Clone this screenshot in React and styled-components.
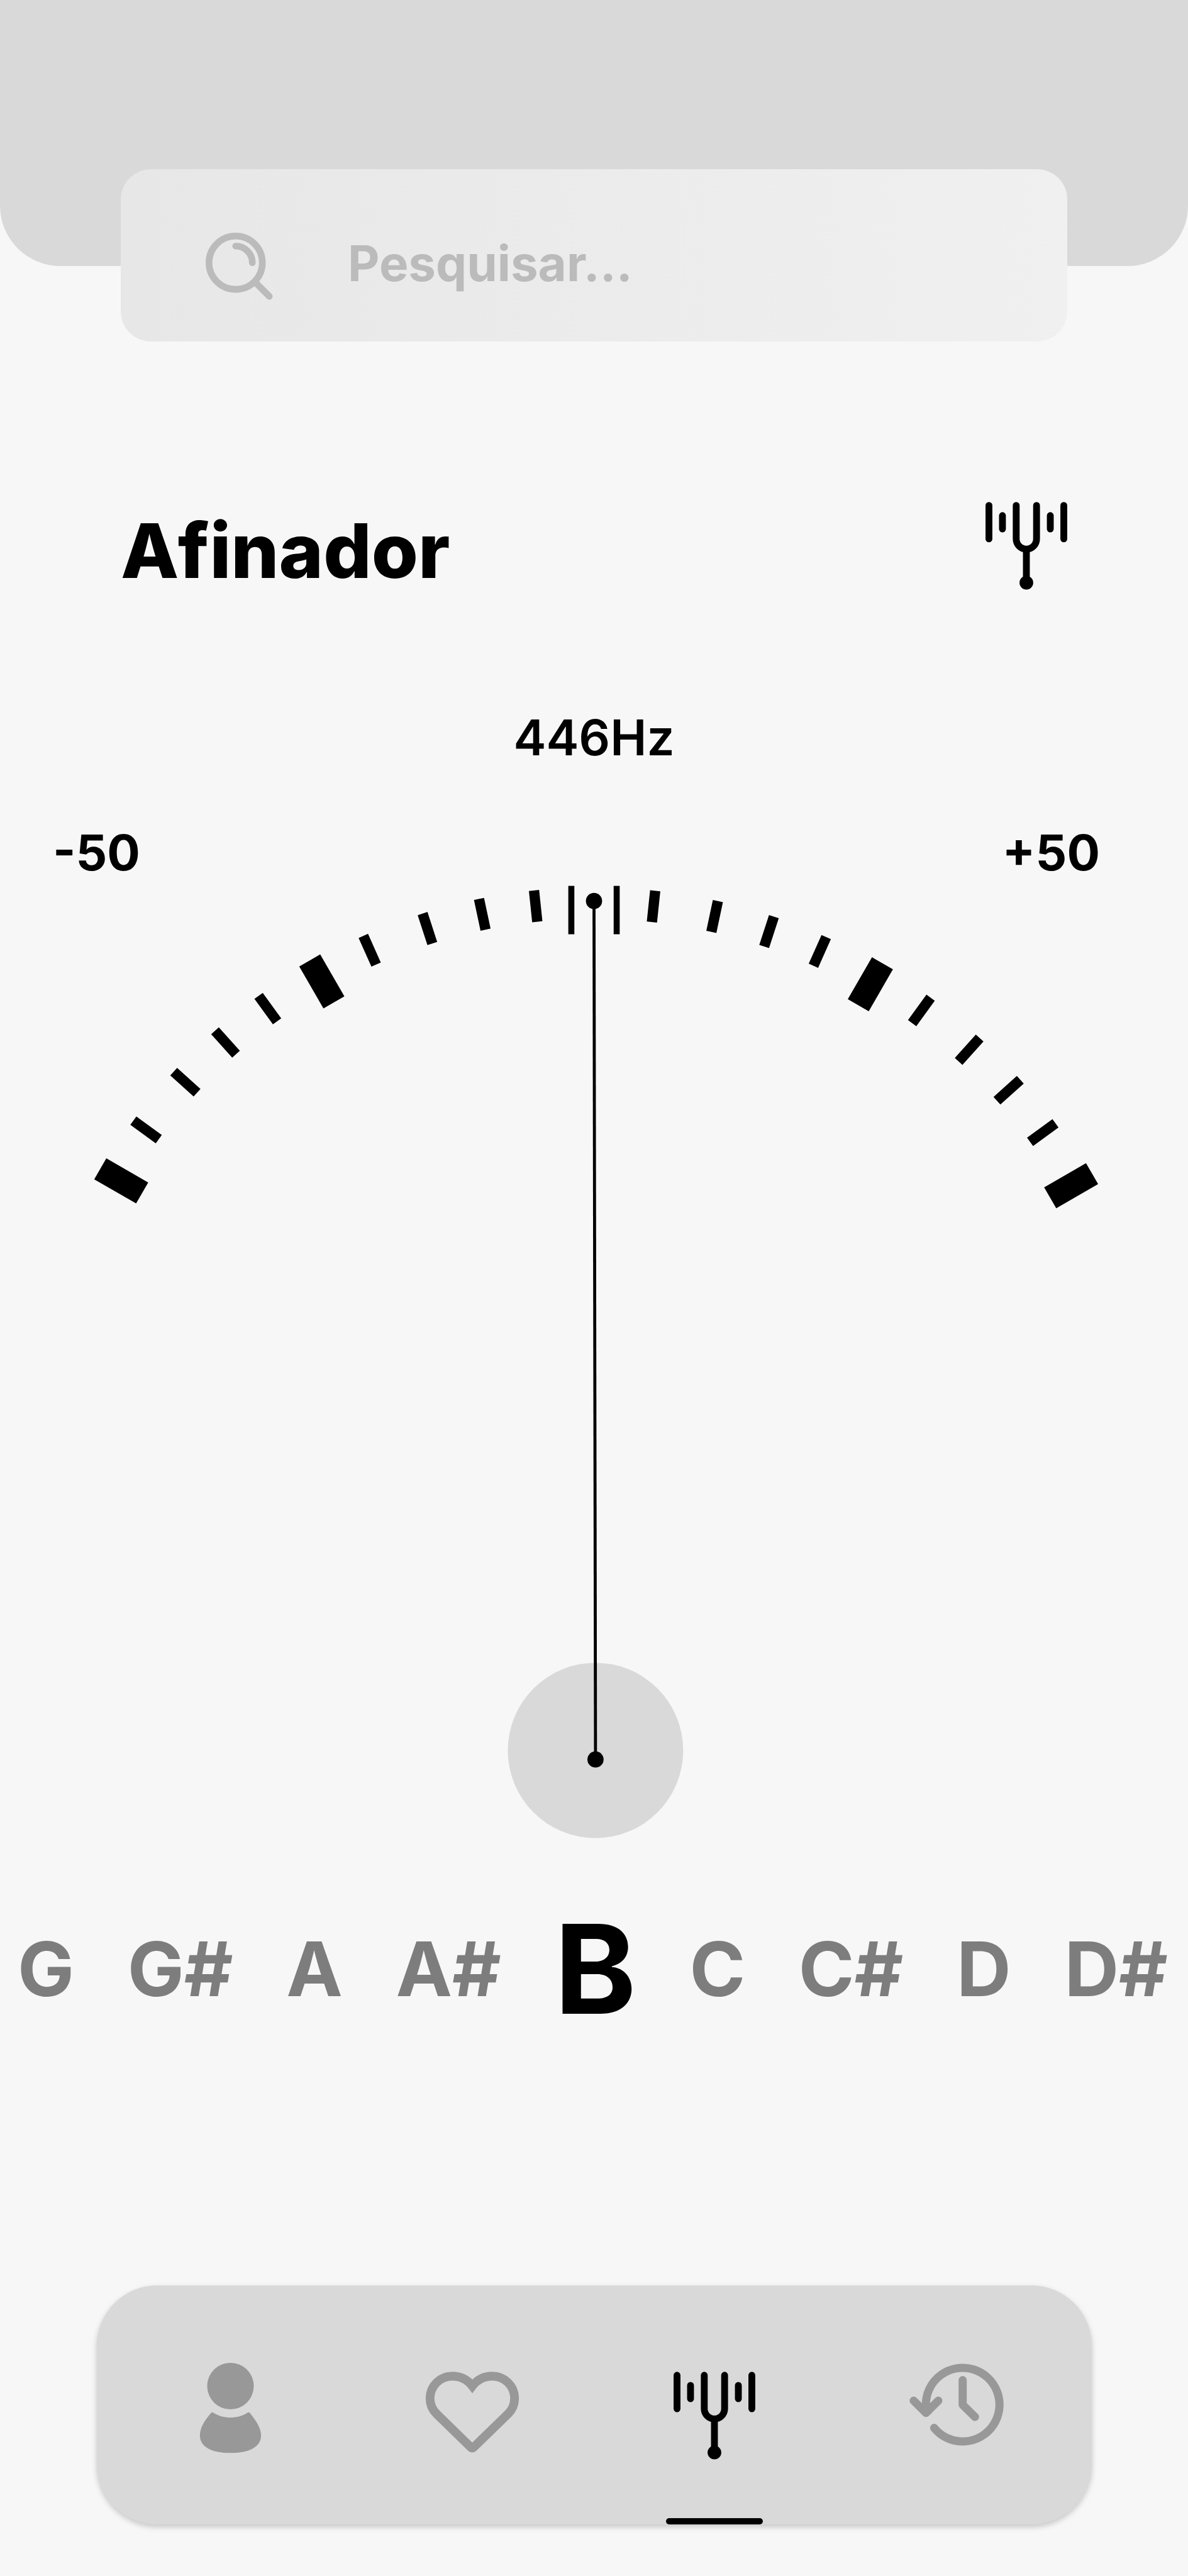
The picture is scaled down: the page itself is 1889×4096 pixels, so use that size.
import React from "react";
import styled, { createGlobalStyle } from "styled-components";

const GlobalStyle = createGlobalStyle`
  *, *::before, *::after { box-sizing: border-box; }
  body {
    margin: 0;
    background: #f7f7f7;
    color: #000;
    font-family: Inter, "Liberation Sans", sans-serif;
  }
`;

const Page = styled.div`
  display: flex;
  flex-direction: column;
  min-height: 100vh;
  padding-bottom: 82px;
  overflow: hidden;
`;

const Header = styled.header`
  height: 423px;
  background: #d9d9d9;
  border-radius: 0 0 96px 96px;
`;

const SearchBox = styled.label`
  display: flex;
  align-items: flex-start;
  gap: 118px;
  height: 274px;
  margin: -154px 192px 0;
  padding: 101px 60px 0 135px;
  border-radius: 48px;
  background: linear-gradient(90deg, #e7e7e7, #f0f0f0);
`;

const SearchIcon = styled.svg`
  flex: none;
  width: 108px;
  height: 108px;
`;

const SearchInput = styled.input`
  flex: 1;
  min-width: 0;
  height: 98px;
  padding: 0;
  border: 0;
  outline: 0;
  background: transparent;
  color: #555;
  font: 700 78px/98px Inter, "Liberation Sans", sans-serif;

  &::placeholder {
    color: #bbb;
    opacity: 1;
  }
`;

const TitleRow = styled.div`
  display: flex;
  align-items: flex-start;
  justify-content: space-between;
  margin: 255px 192px 0;
`;

const Title = styled.h1`
  margin: 0;
  font-size: 120px;
  font-weight: 800;
  line-height: 156px;
`;

const TitleIcon = styled.svg`
  width: 130px;
  height: 140px;
`;

const Frequency = styled.output`
  display: block;
  margin-top: 179px;
  font-size: 78px;
  font-weight: 600;
  line-height: 80px;
  text-align: center;
`;

const RangeRow = styled.div`
  display: flex;
  justify-content: space-between;
  margin-top: 103px;
  padding: 0 140px 0 84px;
`;

const RangeLabel = styled.span`
  font-size: 78px;
  font-weight: 700;
  line-height: 80px;
`;

const Gauge = styled.svg`
  display: block;
  width: 100%;
  height: auto;
  margin-top: 3px;
`;

const Notes = styled.div`
  display: flex;
  align-items: center;
  justify-content: space-between;
  margin-top: 108px;
  padding: 0 32px 0 28px;
`;

const Note = styled.button`
  padding: 0;
  border: 0;
  background: none;
  cursor: pointer;
  font-family: inherit;
  font-size: ${(p) => (p.$active ? 197 : 120)}px;
  font-weight: 700;
  line-height: 200px;
  color: ${(p) => (p.$active ? "#000" : "#7d7d7d")};
`;

const NavBar = styled.nav`
  display: grid;
  grid-template-columns: repeat(4, 1fr);
  height: 380px;
  margin: 403px 153px 0 154px;
  padding: 0 22px 0 19px;
  border-radius: 96px;
  background: #d9d9d9;
  box-shadow: 0 4px 10px rgba(0, 0, 0, 0.2);
`;

const NavLink = styled.a`
  display: flex;
  flex-direction: column;
  align-items: center;
  justify-content: space-between;
  padding-top: 120px;
  color: ${(p) => (p.$active ? "#000" : "#989898")};

  &::after {
    content: "";
    width: 154px;
    height: 10px;
    border-radius: 5px;
    background: ${(p) => (p.$active ? "#000" : "transparent")};
  }
`;

const NavIcon = styled.svg`
  width: 154px;
  height: 154px;
  overflow: visible;
`;

const Fork = () => (
  <g stroke="currentColor" strokeWidth="11.3" strokeLinecap="round" fill="none">
    <path d="M5.7 5.7V61M28 22.4V44.5M107 22.4V44.5M129.3 5.7V61" />
    <path d="M50.7 5.7V61a16.8 16.8 0 0 0 33.6 0V5.7M67.5 78V133" />
    <circle cx="67.5" cy="133.3" r="11.3" fill="currentColor" stroke="none" />
  </g>
);

const Person = () => (
  <g fill="currentColor">
    <circle cx="50.5" cy="38.5" r="38.5" />
    <path d="M22.5 82.6C38 93 63 93 78.5 82.6Q81 81 83 83.5C92 95 101 107 101 120C101 138 83 149 50.5 149C18 149 0 138 0 120C0 107 8 95 18 83.5Q20 81 22.5 82.6Z" />
  </g>
);

const Heart = () => (
  <path
    fill="none"
    stroke="currentColor"
    strokeWidth="14.5"
    d="M77 23.5C69 13 57 7.2 44 7.2C24 7.2 7.2 23 7.2 44C7.2 54 11 62.5 18 69.5L75 125Q77 127 79 125L136 69.5C143 62.5 146.8 54 146.8 44C146.8 23 130 7.2 110 7.2C97 7.2 85 13 77 23.5Z"
  />
);

const History = () => (
  <g
    fill="none"
    stroke="currentColor"
    strokeWidth="13.5"
    strokeLinecap="round"
    strokeLinejoin="round"
  >
    <path d="M26.8 78V67.5A60.8 60.8 0 1 1 40.5 105.7" />
    <path d="M6.7 60.7L27 81L47.3 60.7M27 66V80" />
    <path d="M87.6 26.7V67.5L108 87.5" />
  </g>
);

/* Each tick: centre x, centre y, direction in degrees, and whether it marks a main step */
const TICKS = [
  [200.5, 1953, 30, true],
  [241.6, 1868.6, 36],
  [306.6, 1789.7, 42],
  [373, 1724, 48],
  [443, 1668, 54],
  [532.3, 1623, 60, true],
  [611.5, 1571.4, 66],
  [707, 1535.5, 72],
  [797.7, 1512, 78],
  [886, 1498.4, 84],
  [1081, 1499, 96],
  [1182, 1515.6, 102],
  [1272, 1540.6, 108],
  [1356, 1573.4, 114],
  [1439.6, 1627.7, 120, true],
  [1524, 1671, 126],
  [1603, 1736, 132],
  [1668.3, 1803, 138],
  [1724.8, 1873, 144],
  [1771.7, 1961, 150, true],
];

const NOTES = ["G", "G#", "A", "A#", "B", "C", "C#", "D", "D#"];

const NAV_ITEMS = [
  { id: "perfil", label: "Perfil", Icon: Person, x: 30, y: 3 },
  { id: "favoritos", label: "Favoritos", Icon: Heart, x: 3, y: 18 },
  { id: "afinador", label: "Afinador", Icon: Fork, x: 12.5, y: 18 },
  { id: "historico", label: "Histórico", Icon: History, x: 2.5, y: 5 },
];

function TunerGauge() {
  return (
    <Gauge viewBox="0 1455 1965 1585" aria-hidden="true">
      {TICKS.map(([x, y, angle, major]) => {
        const w = major ? 80 : 52;
        const h = major ? 40 : 17;
        return (
          <rect
            key={x}
            x={x - w / 2}
            y={y - h / 2}
            width={w}
            height={h}
            transform={`rotate(${angle} ${x} ${y})`}
          />
        );
      })}
      <rect x="940" y="1465" width="10" height="80" />
      <rect x="1015" y="1465" width="10" height="80" />
      <circle cx="985" cy="2895" r="145" fill="#d9d9d9" />
      <line x1="982.5" y1="1490" x2="985" y2="2910" stroke="#000" strokeWidth="5" />
      <circle cx="982.5" cy="1490" r="13.4" />
      <circle cx="985" cy="2910" r="13.4" />
    </Gauge>
  );
}

export default function App() {
  return (
    <>
      <GlobalStyle />
      <Page>
        <Header />
        <SearchBox>
          <SearchIcon viewBox="0 0 112 112" aria-hidden="true">
            <g fill="none" stroke="#bbb" strokeWidth="11" strokeLinecap="round">
              <circle cx="49.5" cy="49.5" r="44" />
              <path d="M49.5 22A27.5 27.5 0 0 1 77 49.5M82 82L105 105" />
            </g>
          </SearchIcon>
          <SearchInput type="search" placeholder="Pesquisar..." aria-label="Pesquisar" />
        </SearchBox>

        <main>
          <TitleRow>
            <Title>Afinador</Title>
            <TitleIcon viewBox="0 0 135 145" aria-hidden="true">
              <Fork />
            </TitleIcon>
          </TitleRow>
          <Frequency>446Hz</Frequency>
          <RangeRow>
            <RangeLabel>-50</RangeLabel>
            <RangeLabel>+50</RangeLabel>
          </RangeRow>
          <TunerGauge />
          <Notes>
            {NOTES.map((note) => (
              <Note key={note} type="button" $active={note === "B"} aria-pressed={note === "B"}>
                {note}
              </Note>
            ))}
          </Notes>
        </main>

        <NavBar>
          {NAV_ITEMS.map(({ id, label, Icon, x, y }) => (
            <NavLink key={id} href={`#${id}`} aria-label={label} $active={id === "afinador"}>
              <NavIcon viewBox="0 0 160 160" aria-hidden="true">
                <g transform={`translate(${x} ${y})`}>
                  <Icon />
                </g>
              </NavIcon>
            </NavLink>
          ))}
        </NavBar>
      </Page>
    </>
  );
}
